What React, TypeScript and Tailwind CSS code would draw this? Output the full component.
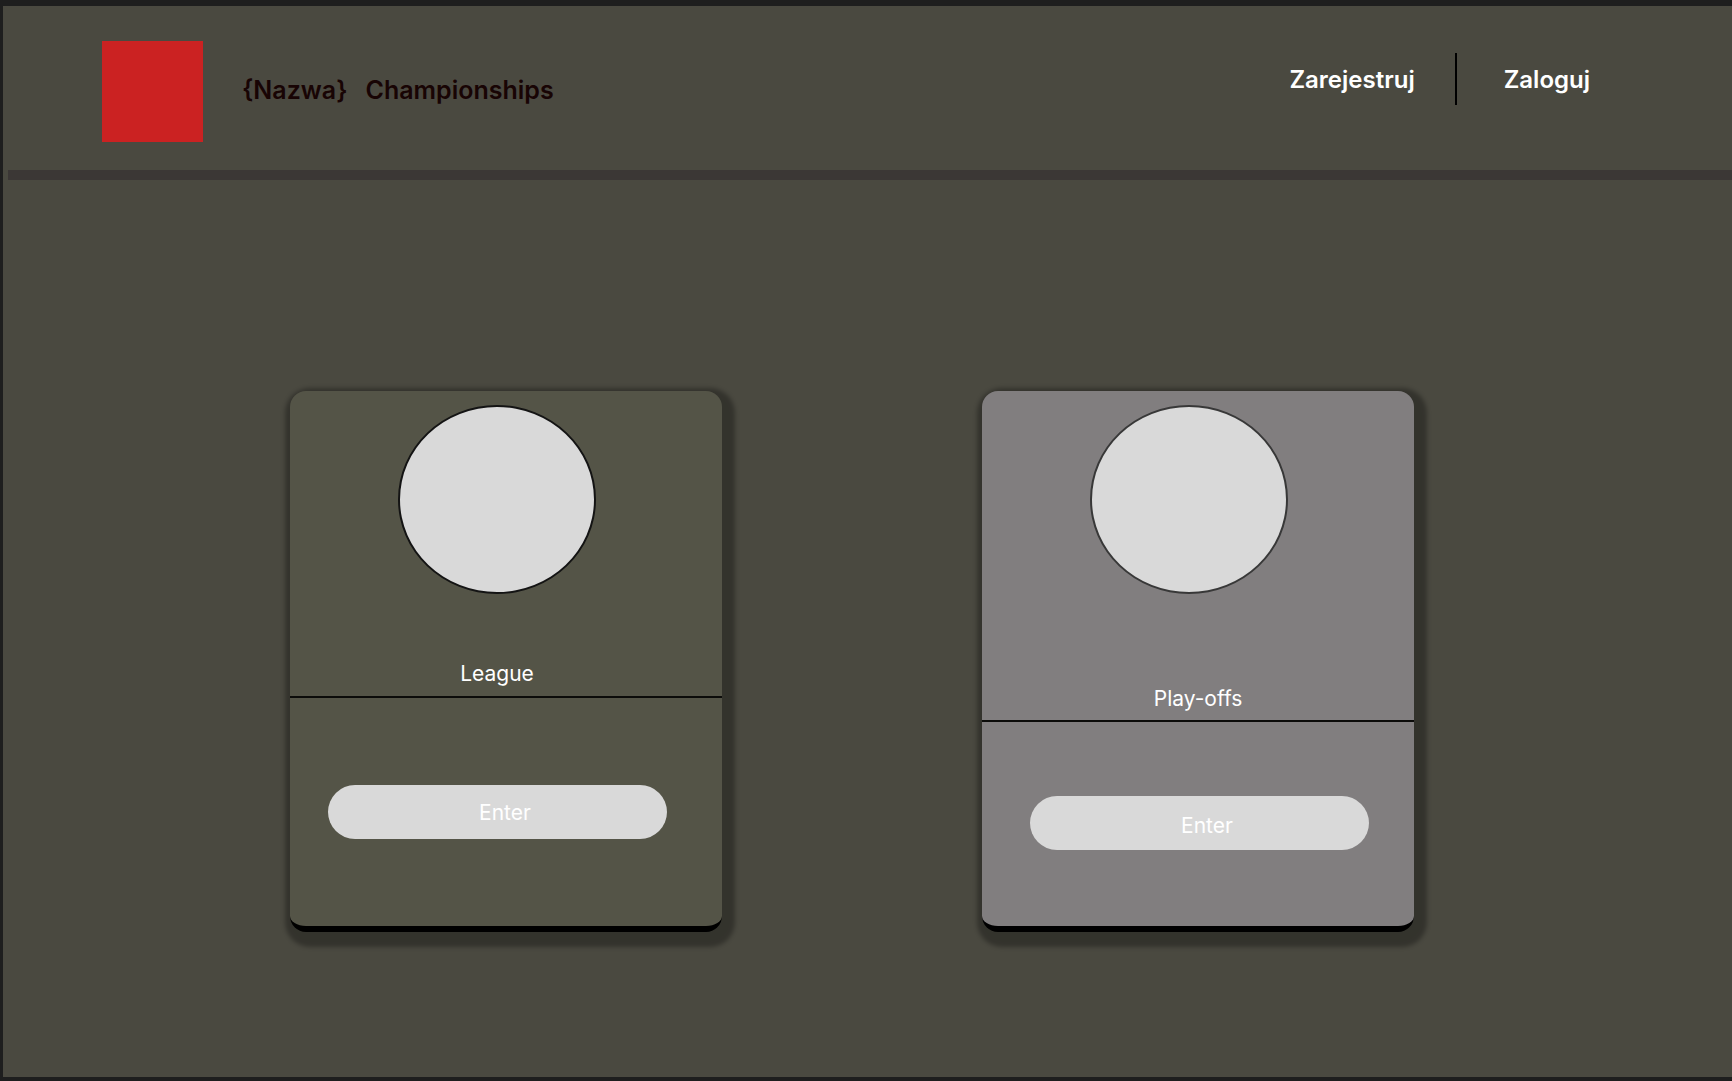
type CompetitionProps = {
  title: string;
  cardClass: string;
  badgeClass: string;
  headClass: string;
  titleClass: string;
  actionClass: string;
  buttonClass: string;
};

const competitions: CompetitionProps[] = [
  {
    title: "League",
    cardClass: "bg-[#545447]",
    badgeClass: "border-2 border-[#141414]",
    headClass: "min-h-[307px]",
    titleClass: "pr-[18px] pb-px",
    actionClass: "pt-[87px] pr-[18px]",
    buttonClass: "pt-0.5 pl-4",
  },
  {
    title: "Play-offs",
    cardClass: "bg-[#817e7f]",
    badgeClass: "border-2 border-[#383838]",
    headClass: "min-h-[331px]",
    titleClass: "",
    actionClass: "pt-[74px] pl-0.5",
    buttonClass: "pt-1.5 pl-4",
  },
];

function CompetitionCard({
  title,
  cardClass,
  badgeClass,
  headClass,
  titleClass,
  actionClass,
  buttonClass,
}: CompetitionProps) {
  return (
    <article
      className={`min-h-[541px] w-full max-w-[432px] rounded-2xl border-b-[6px] border-black shadow-[4px_6px_4px_9px_rgba(0,0,0,0.3)] ${cardClass}`}
    >
      <div className={`flex flex-col justify-between border-b-2 border-[#0c0c0a] pt-3.5 pb-[9px] ${headClass}`}>
        <div className="flex justify-center pr-[18px]">
          <div className={`h-[189px] w-[198px] rounded-[50%] bg-[#d9d9d9] ${badgeClass}`} />
        </div>
        <h2 className={`text-center text-[21px] leading-6 text-white ${titleClass}`}>{title}</h2>
      </div>
      <div className={`flex justify-center ${actionClass}`}>
        <button
          type="button"
          aria-label={`Enter ${title}`}
          className={`h-[54px] w-[339px] rounded-full bg-[#d9d9d9] text-[21px] leading-6 text-white ${buttonClass}`}
        >
          Enter
        </button>
      </div>
    </article>
  );
}

export default function App() {
  return (
    <div className="flex min-h-screen flex-col border-t-[6px] border-b-4 border-l-[3px] border-[#1e1e1e] bg-[#4a4940] font-['Inter',sans-serif]">
      <header>
        <div className="flex items-start justify-between pt-[35px] pr-[142px] pb-7 pl-[99px]">
          <div className="flex items-center gap-[39px]">
            <div className="size-[101px] bg-[#cb2222]" />
            <h1 className="flex gap-[18px] pb-1 text-[25px] leading-8 font-semibold text-[#180404]">
              <span>{"{Nazwa}"}</span>
              <span>Championships</span>
            </h1>
          </div>
          <nav className="flex items-center pt-3 text-2xl font-semibold text-white">
            <a href="#register" className="pt-0.5">Zarejestruj</a>
            <span className="mr-[47px] ml-10 h-[52px] w-0.5 bg-black" />
            <a href="#login" className="pt-0.5">Zaloguj</a>
          </nav>
        </div>
        <div className="ml-[5px] h-2.5 bg-[#3b3735]" />
      </header>
      <main className="flex flex-1 items-start justify-center gap-[260px] pt-[211px] pr-[31px] pb-36">
        {competitions.map((competition) => (
          <CompetitionCard key={competition.title} {...competition} />
        ))}
      </main>
    </div>
  );
}
